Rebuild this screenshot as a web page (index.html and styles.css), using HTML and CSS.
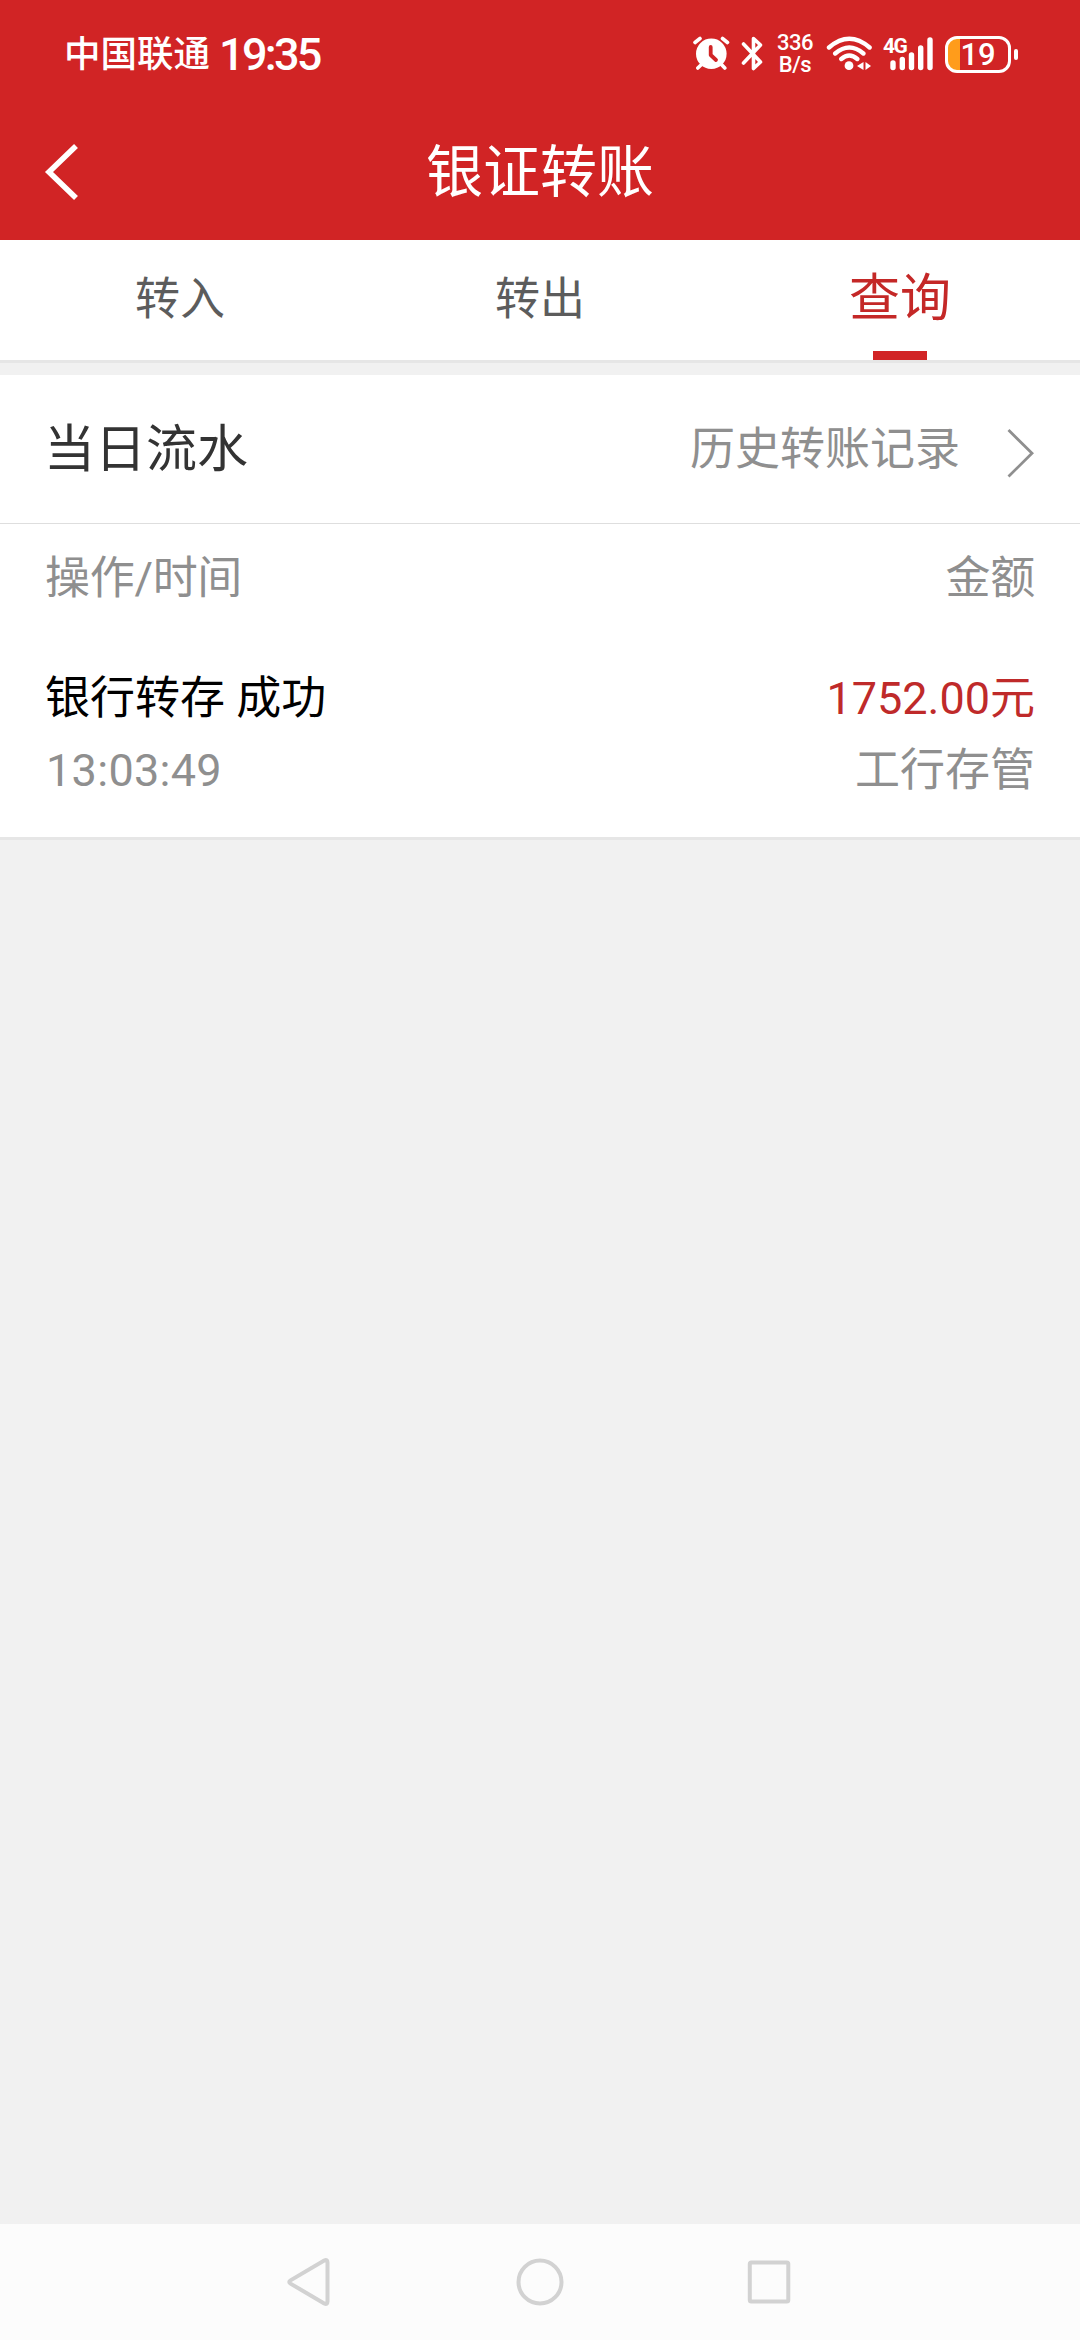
FILE: index.html
```
<!DOCTYPE html>
<html lang="zh-CN">
<head>
    <meta charset="UTF-8">
    <meta name="viewport" content="width=device-width, initial-scale=1.0">
    <title>银证转账</title>
    <link rel="stylesheet" href="styles.css">
</head>
<body>
    <div class="status-bar">
        <div class="status-left">
            <span class="carrier">中国联通</span>
            <span class="clock">19:35</span>
        </div>
        <div class="status-right">
            <svg class="alarm" width="38" height="38" viewBox="0 0 38 38">
                <circle cx="19.3" cy="18.7" r="15.3" fill="#fff"/>
                <path d="M3 7.5L8 3.5M35.5 7.5L30.5 3.5M5.8 33L10 29M32.8 33L29 29" stroke="#fff" stroke-width="3.6" stroke-linecap="round"/>
                <path d="M18.7 12V20L24 25" fill="none" stroke="#d12425" stroke-width="3.8" stroke-linecap="round" stroke-linejoin="round"/>
            </svg>
            <svg class="bluetooth" width="22" height="38" viewBox="0 0 22 38">
                <path d="M2.5 9L19.5 27L12.5 33.5V3.5L19.5 10L2.5 28" fill="none" stroke="#fff" stroke-width="3.6" stroke-linecap="round" stroke-linejoin="round"/>
            </svg>
            <div class="speed">
                <span>336</span>
                <span>B/s</span>
            </div>
            <svg class="wifi" width="48" height="38" viewBox="0 0 48 38">
                <path d="M3 12.5Q23.3 -5 43.6 12.5M9.2 18.5Q23.3 6.5 37.4 18.5M15.3 24Q23.3 17 31.3 24" fill="none" stroke="#fff" stroke-width="4.4" stroke-linecap="round"/>
                <circle cx="23" cy="30.7" r="4.4" fill="#fff"/>
                <path d="M31 31L37.5 27V35ZM39.5 27L45 31L39.5 35Z" fill="#fff"/>
            </svg>
            <div class="signal">
                <span class="network">4G</span>
                <svg width="52" height="38" viewBox="0 0 52 38">
                    <path d="M11 28V32.5M20.3 24.5V32.5M29.5 20V32.5M38.7 13V32.5M48 5V32.5" stroke="#fff" stroke-width="5.4" stroke-linecap="round"/>
                </svg>
            </div>
            <div class="battery">19</div>
            <div class="battery-cap"></div>
        </div>
    </div>

    <div class="header">
        <svg class="back" width="40" height="64" viewBox="0 0 40 64">
            <path d="M36 6L9 32L36 58" fill="none" stroke="#fff" stroke-width="5.6"/>
        </svg>
        <h1>银证转账</h1>
    </div>

    <div class="tabs">
        <div class="tab">转入</div>
        <div class="tab">转出</div>
        <div class="tab active">查询</div>
    </div>

    <div class="card">
        <div class="card-head">
            <h2>当日流水</h2>
            <a class="history">历史转账记录
                <svg width="30" height="54" viewBox="0 0 30 54">
                    <path d="M3.5 4L27 27.3L3.5 50.5" fill="none" stroke="#8f8f8f" stroke-width="2.8"/>
                </svg>
            </a>
        </div>
        <div class="row labels">
            <span>操作/时间</span>
            <span>金额</span>
        </div>
        <div class="row main">
            <span>银行转存 成功</span>
            <span class="amount">1752.00元</span>
        </div>
        <div class="row detail">
            <span class="time">13:03:49</span>
            <span>工行存管</span>
        </div>
    </div>

    <div class="nav-bar">
        <svg width="48" height="48" viewBox="0 0 48 48">
            <path d="M38.2 2.6Q41.5 1 41.5 4.5V43.5Q41.5 47 38.2 45.4L4.5 25.6Q2 24 4.5 22.4Z" fill="none" stroke="#d2d2d2" stroke-width="4"/>
        </svg>
        <svg width="48" height="48" viewBox="0 0 48 48">
            <circle cx="24" cy="24" r="21.5" fill="none" stroke="#d2d2d2" stroke-width="4"/>
        </svg>
        <svg width="48" height="48" viewBox="0 0 48 48">
            <rect x="3.8" y="4.5" width="38.5" height="39" rx="1.5" fill="none" stroke="#d2d2d2" stroke-width="4"/>
        </svg>
    </div>
</body>
</html>
```

FILE: styles.css
```
* {
    box-sizing: border-box;
}

body {
    font-family: Roboto, "Noto Sans CJK SC", sans-serif;
    margin: 0;
    height: 2340px;
    display: flex;
    flex-direction: column;
    background-color: #f1f1f1;
    font-size: 45px;
}

h1, h2 {
    margin: 0;
    font-weight: 400;
}

svg {
    display: block;
    flex-shrink: 0;
}

.status-bar {
    height: 108px;
    padding: 0 62px 0 64px;
    display: flex;
    justify-content: space-between;
    align-items: center;
    background-color: #d12425;
    color: white;
}

.status-left, .status-right {
    display: flex;
    align-items: center;
}

.carrier {
    padding-top: 2px;
    font-size: 36.5px;
    line-height: 54px;
    font-weight: 500;
}

.clock {
    margin-left: 9px;
    padding-top: 2px;
    font-size: 45px;
    line-height: 54px;
    font-weight: 500;
    letter-spacing: -2.7px;
}

.alarm {
    margin-right: 11px;
}

.bluetooth {
    margin-right: 13px;
}

.speed {
    width: 38px;
    margin-right: 12px;
    display: flex;
    flex-direction: column;
    align-items: center;
    font-size: 22px;
    line-height: 22px;
    font-weight: 500;
    letter-spacing: -0.5px;
}

.wifi {
    margin-right: 8px;
}

.signal {
    position: relative;
    margin-right: 11px;
}

.network {
    position: absolute;
    left: 1px;
    top: 0;
    font-size: 21px;
    line-height: 22px;
    font-weight: 700;
    letter-spacing: -1.5px;
}

.battery {
    width: 66px;
    height: 37px;
    border: 3px solid white;
    border-radius: 12px;
    background: linear-gradient(to right, #ff9c1b 12px, transparent 12px);
    font-size: 31px;
    line-height: 32px;
    font-weight: 500;
    text-align: center;
}

.battery-cap {
    width: 4px;
    height: 11px;
    margin-left: 3px;
    border-radius: 2px;
    background-color: white;
}

.header {
    height: 132px;
    padding: 0 40px;
    display: grid;
    grid-template-columns: 40px 1fr 40px;
    align-items: start;
    background-color: #d12425;
    color: white;
}

.back {
    margin-top: 32px;
}

.header h1 {
    margin-top: 25px;
    font-size: 57px;
    line-height: 80px;
    text-align: center;
}

.tabs {
    height: 123px;
    display: flex;
    background-color: white;
    border-bottom: 3px solid #e6e6e6;
}

.tab {
    flex: 1;
    display: flex;
    flex-direction: column;
    align-items: center;
    line-height: 120px;
    color: #5c5c5c;
}

.tab.active {
    padding-top: 7px;
    font-size: 51px;
    line-height: 104px;
    color: #c42827;
}

.tab.active::after {
    content: "";
    width: 54px;
    height: 9px;
    background-color: #d12425;
}

.card {
    margin-top: 12px;
    height: 465px;
    background-color: white;
    border-bottom: 3px solid #e6e6e6;
}

.card-head {
    height: 149px;
    padding: 0 45px;
    display: flex;
    justify-content: space-between;
    border-bottom: 1px solid #dedede;
}

.card-head h2 {
    margin-left: -1px;
    font-size: 51px;
    line-height: 150px;
    color: #333;
}

.history {
    display: flex;
    line-height: 150px;
    color: #8f8f8f;
}

.history svg {
    margin: 51px 0 0 45px;
}

.row {
    padding: 0 45px;
    display: flex;
    justify-content: space-between;
    line-height: 72px;
    color: #8f8f8f;
}

.row.labels {
    padding-top: 19px;
    letter-spacing: -0.3px;
}

.row.main {
    padding-top: 48px;
    color: black;
}

.amount {
    color: #bf2a2a;
}

.time {
    margin-left: 1px;
    letter-spacing: 0.3px;
}

.nav-bar {
    height: 116px;
    margin-top: auto;
    display: flex;
    justify-content: center;
    align-items: center;
    gap: 182px;
    background-color: #fcfcfc;
}
```
